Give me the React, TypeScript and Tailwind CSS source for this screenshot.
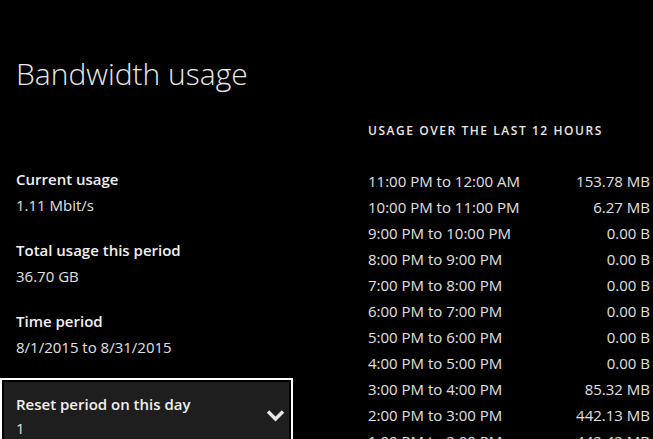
const usage: [string, string][] = [
  ["11:00 PM to 12:00 AM", "153.78 MB"],
  ["10:00 PM to 11:00 PM", "6.27 MB"],
  ["9:00 PM to 10:00 PM", "0.00 B"],
  ["8:00 PM to 9:00 PM", "0.00 B"],
  ["7:00 PM to 8:00 PM", "0.00 B"],
  ["6:00 PM to 7:00 PM", "0.00 B"],
  ["5:00 PM to 6:00 PM", "0.00 B"],
  ["4:00 PM to 5:00 PM", "0.00 B"],
  ["3:00 PM to 4:00 PM", "85.32 MB"],
  ["2:00 PM to 3:00 PM", "442.13 MB"],
  ["1:00 PM to 2:00 PM", "442.42 MB"],
];

function Stat({ label, value }: { label: string; value: string }) {
  return (
    <div className="mb-[19px] pl-4 text-[15px] leading-[26px]">
      <div className="font-semibold text-[#f0f0f0]">{label}</div>
      <div className="text-[#e0e0e0]">{value}</div>
    </div>
  );
}

export default function App() {
  return (
    <div
      className="flex h-[439px] w-[653px] overflow-hidden bg-black text-white"
      style={{ fontFamily: '"Open Sans", "Noto Sans", sans-serif' }}
    >
      {/* left column */}
      <div className="flex w-[293px] shrink-0 flex-col">
        <h1 className="mt-[54px] pl-4 text-[30px] font-light leading-[40px] text-[#e8e8e8]">
          Bandwidth usage
        </h1>
        <div className="mt-[72px]">
          <Stat label="Current usage" value="1.11 Mbit/s" />
          <Stat label="Total usage this period" value="36.70 GB" />
          <Stat label="Time period" value="8/1/2015 to 8/31/2015" />
        </div>
        <div className="-mt-px border-2 border-white p-[2px]">
          <div className="flex items-center justify-between bg-[#1e1e1e] pl-3 pr-[4px] pt-[10px] text-[15px] leading-[24px]">
            <div>
              <div className="font-semibold text-[#f0f0f0]">Reset period on this day</div>
              <div className="text-[#e0e0e0]">1</div>
            </div>
            <svg width="19" height="13" viewBox="0 0 19 13" className="mb-[2px]">
              <path d="M2 2.5 L9.5 10 L17 2.5" fill="none" stroke="#e6e6e6" strokeWidth="3.4" />
            </svg>
          </div>
        </div>
      </div>

      {/* right column */}
      <div className="ml-[75px] flex w-[282px] shrink-0 flex-col">
        <div className="mt-[121px] text-[12px] font-semibold uppercase leading-[20px] tracking-[1.55px] text-[#e8e8e8]">
          Usage over the last 12 hours
        </div>
        <div className="mt-[27px] text-[15px] leading-[26px] text-[#e0e0e0]">
          {usage.map(([period, amount]) => (
            <div key={period} className="flex justify-between">
              <span>{period}</span>
              <span>{amount}</span>
            </div>
          ))}
        </div>
      </div>
    </div>
  );
}
